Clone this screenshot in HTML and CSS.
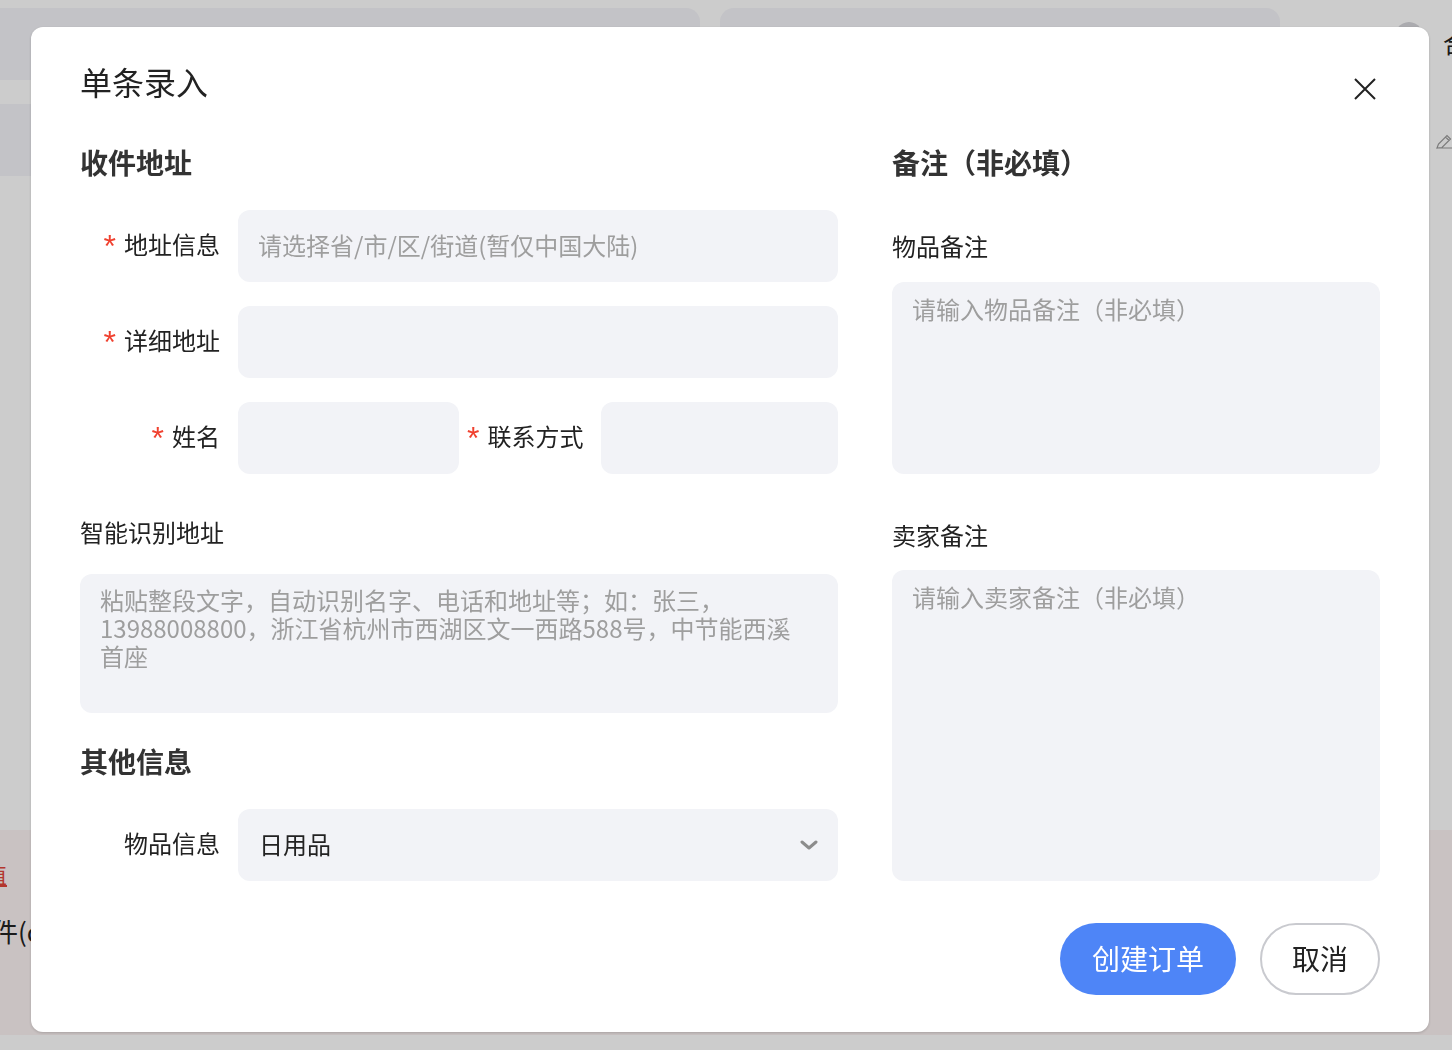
FILE: index.html
```html
<!DOCTYPE html>
<html lang="zh-CN">
<head>
    <meta charset="UTF-8">
    <meta name="viewport" content="width=device-width, initial-scale=1.0">
    <title>单条录入</title>
    <link rel="stylesheet" href="styles.css">
</head>
<body>

<div class="page">
    <div class="page-top">
        <div class="page-card"></div>
        <div class="page-card small"></div>
        <div class="page-avatar"></div>
        <div class="page-user">合</div>
    </div>
    <div class="page-strip">
        <div class="page-band"></div>
        <svg class="page-pencil" viewBox="0 0 16 16" width="16" height="16">
            <path d="M1 14 L2.5 10 L11 1.5 L14.5 5 L6 13.5 Z M1 14 L16 14 M9.5 3 L13 6.5" fill="none" stroke="#9a9a9a" stroke-width="1.2"/>
        </svg>
    </div>
    <div class="page-spacer"></div>
    <div class="page-footer">
        <div class="page-link">值</div>
        <div class="page-file">文件(docx)</div>
    </div>
</div>

<div class="mask"></div>

<div class="dialog">
    <div class="dialog-head">
        <h1 class="dialog-title">单条录入</h1>
        <button class="close" aria-label="关闭">
            <svg viewBox="0 0 22 22" width="22" height="22">
                <path d="M1 1 L21 21 M21 1 L1 21" stroke="#222" stroke-width="2" fill="none"/>
            </svg>
        </button>
    </div>

    <div class="dialog-body">
        <div class="col">
            <h2 class="section-title">收件地址</h2>

            <div class="form-row first">
                <label class="form-label"><span class="req">*</span>地址信息</label>
                <input class="field" type="text" placeholder="请选择省/市/区/街道(暂仅中国大陆)">
            </div>
            <div class="form-row">
                <label class="form-label"><span class="req">*</span>详细地址</label>
                <input class="field" type="text">
            </div>
            <div class="form-row">
                <label class="form-label"><span class="req">*</span>姓名</label>
                <div class="form-pair">
                    <input class="field name" type="text">
                    <label class="form-label pair-label"><span class="req">*</span>联系方式</label>
                    <input class="field phone" type="text">
                </div>
            </div>

            <div class="block-label smart">智能识别地址</div>
            <textarea class="field area smart-area" placeholder="粘贴整段文字，自动识别名字、电话和地址等；如：张三，&#10;13988008800，浙江省杭州市西湖区文一西路588号，中节能西溪&#10;首座"></textarea>

            <h2 class="section-title other">其他信息</h2>
            <div class="form-row first">
                <label class="form-label">物品信息</label>
                <div class="select">
                    <select class="field">
                        <option>日用品</option>
                        <option>食品</option>
                        <option>文件</option>
                    </select>
                    <svg class="chevron" viewBox="0 0 18 10" width="18" height="10">
                        <path d="M2 2 L9 8 L16 2" stroke="#8c8c8c" stroke-width="3" fill="none" stroke-linecap="round" stroke-linejoin="round"/>
                    </svg>
                </div>
            </div>
        </div>

        <div class="col">
            <h2 class="section-title">备注（非必填）</h2>
            <div class="block-label note">物品备注</div>
            <textarea class="field area goods-area" placeholder="请输入物品备注（非必填）"></textarea>
            <div class="block-label seller">卖家备注</div>
            <textarea class="field area seller-area" placeholder="请输入卖家备注（非必填）"></textarea>
        </div>
    </div>

    <div class="dialog-foot">
        <button class="btn btn-primary">创建订单</button>
        <button class="btn btn-cancel">取消</button>
    </div>
</div>

</body>
</html>
```

FILE: styles.css
```css
    * {
        box-sizing: border-box;
    }
    body {
        margin: 0;
        font-family: "Noto Sans CJK SC", "Noto Sans", sans-serif;
        color: #222;
        background: #fff;
        overflow: hidden;
    }

    /* page behind the dialog */
    .page {
        height: 100vh;
        display: flex;
        flex-direction: column;
    }
    .page-top {
        display: flex;
        align-items: flex-start;
        padding-top: 8px;
        height: 80px;
    }
    .page-top > * {
        flex: none;
    }
    .page-card {
        width: 700px;
        height: 72px;
        background: #f4f4f9;
        border-radius: 0 14px 0 0;
    }
    .page-card.small {
        width: 560px;
        margin-left: 20px;
        border-radius: 14px 14px 0 0;
    }
    .page-avatar {
        width: 32px;
        height: 40px;
        margin: 14px 0 0 113px;
        border-radius: 50%;
        background: #d6d6db;
    }
    .page-user {
        margin: 22px 0 0 18px;
        font-size: 24px;
        line-height: 26px;
    }
    .page-strip {
        display: flex;
        margin-top: 24px;
        height: 72px;
    }
    .page-band {
        width: 700px;
        background: #f4f4f9;
    }
    .page-pencil {
        flex: none;
        margin: 30px 0 0 auto;
    }
    .page-spacer {
        flex: 1;
    }
    .page-footer {
        height: 205px;
        margin-bottom: 15px;
        background: #fcf3f3;
        padding-top: 30px;
    }
    .page-link {
        margin-left: -15px;
        font-size: 22px;
        line-height: 26px;
        color: #e0443a;
        text-decoration: underline;
    }
    .page-file {
        margin: 30px 0 0 -34px;
        font-size: 26px;
        line-height: 30px;
    }
    .mask {
        position: fixed;
        inset: 0;
        background: rgba(0, 0, 0, 0.2);
    }

    /* dialog */
    .dialog {
        position: fixed;
        left: 31px;
        top: 27px;
        width: 1398px;
        height: 1005px;
        padding: 0 49px;
        background: #fff;
        border-radius: 12px;
        box-shadow: 0 1px 3px rgba(0, 0, 0, 0.18);
        display: flex;
        flex-direction: column;
    }
    .dialog-head {
        display: flex;
        justify-content: space-between;
        align-items: flex-start;
        padding-top: 30px;
    }
    .dialog-title {
        margin: 0;
        font-size: 32px;
        font-weight: 400;
        line-height: 48px;
        color: #222;
    }
    .close {
        width: 22px;
        height: 22px;
        margin: 21px 4px 0 0;
        padding: 0;
        border: none;
        background: none;
        cursor: pointer;
    }
    .close svg {
        display: block;
    }
    .dialog-body {
        display: grid;
        grid-template-columns: 758px 488px;
        column-gap: 54px;
        margin-top: 37px;
    }
    .col {
        display: flex;
        flex-direction: column;
    }
    .section-title {
        margin: 0;
        font-size: 28px;
        font-weight: 700;
        line-height: 40px;
        color: #333;
    }
    .section-title.other {
        margin-top: 28px;
    }

    .form-row {
        display: grid;
        grid-template-columns: 140px 600px;
        column-gap: 18px;
        align-items: center;
        margin-top: 24px;
    }
    .form-row.first {
        margin-top: 28px;
    }
    .form-label {
        font-size: 24px;
        line-height: 34px;
        padding-bottom: 4px;
        text-align: right;
        white-space: nowrap;
    }
    .req {
        display: inline-block;
        font-family: "Liberation Sans", Arial, sans-serif;
        font-size: 32px;
        line-height: 20px;
        color: #f0412f;
        margin-right: 8px;
        vertical-align: -3px;
    }
    .form-pair {
        display: flex;
        align-items: center;
    }
    .pair-label {
        width: 116px;
        margin: 0 18px 0 8px;
    }

    .field {
        display: block;
        width: 100%;
        height: 72px;
        padding: 0 20px 4px;
        border: none;
        border-radius: 12px;
        background: #f2f3f7;
        font-family: inherit;
        font-size: 24px;
        color: #222;
        outline: none;
    }
    .field::placeholder {
        color: #9e9e9e;
    }
    .field.name {
        width: 221px;
        flex: none;
    }
    .field.phone {
        width: 237px;
        flex: none;
    }
    .area {
        padding: 13px 20px;
        line-height: 28px;
        resize: none;
    }

    .block-label {
        font-size: 24px;
        line-height: 34px;
    }
    .block-label.smart {
        margin-top: 41px;
    }
    .smart-area {
        margin-top: 25px;
        height: 139px;
        padding-top: 12px;
    }
    .block-label.note {
        margin-top: 47px;
    }
    .goods-area {
        margin-top: 19px;
        height: 192px;
    }
    .block-label.seller {
        margin-top: 44px;
    }
    .seller-area {
        margin-top: 18px;
        height: 311px;
    }

    .select {
        position: relative;
    }
    .select select {
        appearance: none;
        -webkit-appearance: none;
        padding-left: 21px;
        cursor: pointer;
    }
    .chevron {
        position: absolute;
        right: 20px;
        top: 31px;
        pointer-events: none;
    }

    .dialog-foot {
        display: flex;
        justify-content: flex-end;
        gap: 24px;
        margin-top: 42px;
    }
    .btn {
        height: 72px;
        padding: 0 0 2px;
        border-radius: 36px;
        font-family: inherit;
        font-size: 28px;
        cursor: pointer;
    }
    .btn-primary {
        width: 176px;
        border: none;
        background: #4e85f7;
        color: #fff;
    }
    .btn-cancel {
        width: 120px;
        border: 2px solid #c9cacf;
        background: #fff;
        color: #222;
    }
```
